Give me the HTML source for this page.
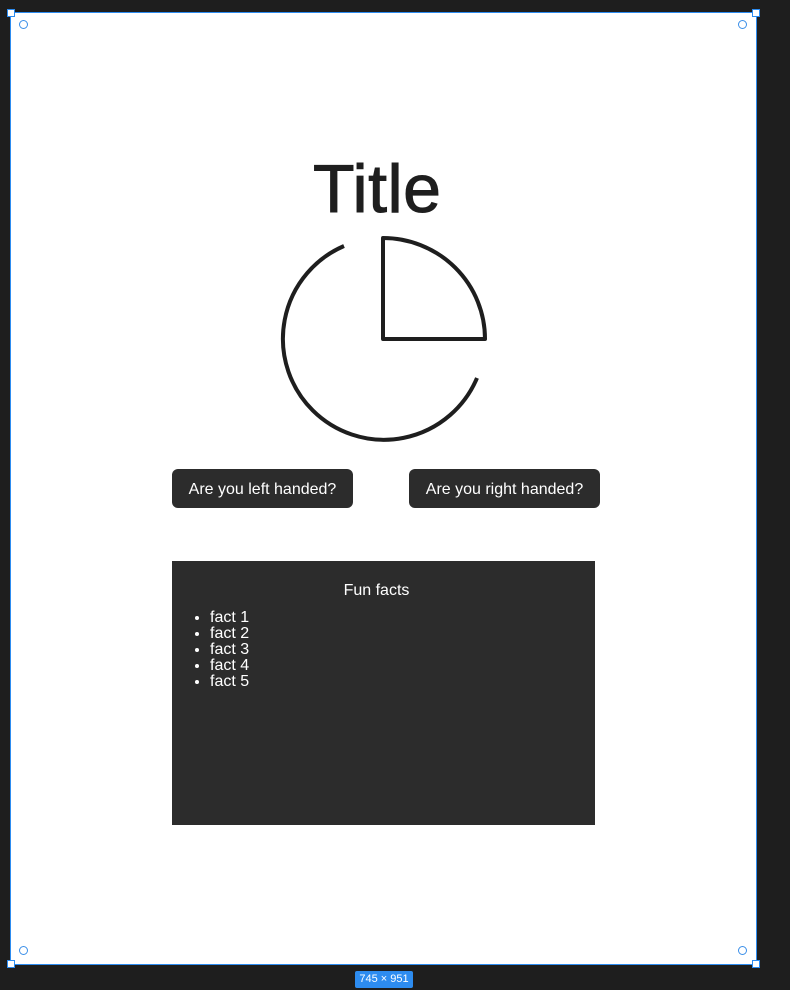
<!DOCTYPE html><html><head><style>
body{margin:0;width:790px;height:990px;background:#1e1e1e;position:relative;overflow:hidden;font-family:"Liberation Sans",sans-serif}
.frame{position:absolute;left:10px;top:12px;width:745px;height:951px;background:#fff;border:1px solid #2d8cf0}
.h{position:absolute;width:6px;height:6px;background:#fff;border:1px solid #2d8cf0}
.c{position:absolute;width:7px;height:7px;border:1.5px solid #3b8fe8;border-radius:50%}
.btn{position:absolute;top:469px;height:39px;background:#2c2c2c;border-radius:6px;color:#fff;font-size:16px;line-height:41px;text-align:center}
</style></head><body>
<div class="frame"></div>
<div class="h" style="left:7px;top:9px"></div><div class="h" style="left:752px;top:9px"></div>
<div class="h" style="left:7px;top:960px"></div><div class="h" style="left:752px;top:960px"></div>
<div class="c" style="left:19px;top:20px"></div><div class="c" style="left:738px;top:20px"></div>
<div class="c" style="left:19px;top:946px"></div><div class="c" style="left:738px;top:946px"></div>
<div style="position:absolute;left:313px;top:150px;font-size:68px;color:#1e1e1e;letter-spacing:0.5px;-webkit-text-stroke:1px #1e1e1e">Title</div>
<svg style="position:absolute;left:0;top:0" width="790" height="990"><g fill="none" stroke="#1e1e1e" stroke-width="4" stroke-linejoin="round">
<path d="M344,246 A101,101 0 1 0 477,378"/>
<path d="M383,238 L383,339 L485,339 A102,101 0 0 0 383,238 Z"/></g></svg>
<div class="btn" style="left:172px;width:181px">Are you left handed?</div>
<div class="btn" style="left:409px;width:191px">Are you right handed?</div>
<div style="position:absolute;left:172px;top:561px;width:423px;height:264px;background:#2c2c2c;color:#fff;font-size:16px">
<div style="text-align:center;margin-top:21px;padding-right:14px">Fun facts</div>
<ul style="margin:10px 0 0;padding-left:38px;line-height:16px"><li>fact 1</li><li>fact 2</li><li>fact 3</li><li>fact 4</li><li>fact 5</li></ul></div>
<div style="position:absolute;left:355px;top:971px;width:58px;height:17px;background:#2d8cf0;border-radius:2px;color:#fff;font-size:11px;line-height:17px;text-align:center">745 × 951</div>
</body></html>
